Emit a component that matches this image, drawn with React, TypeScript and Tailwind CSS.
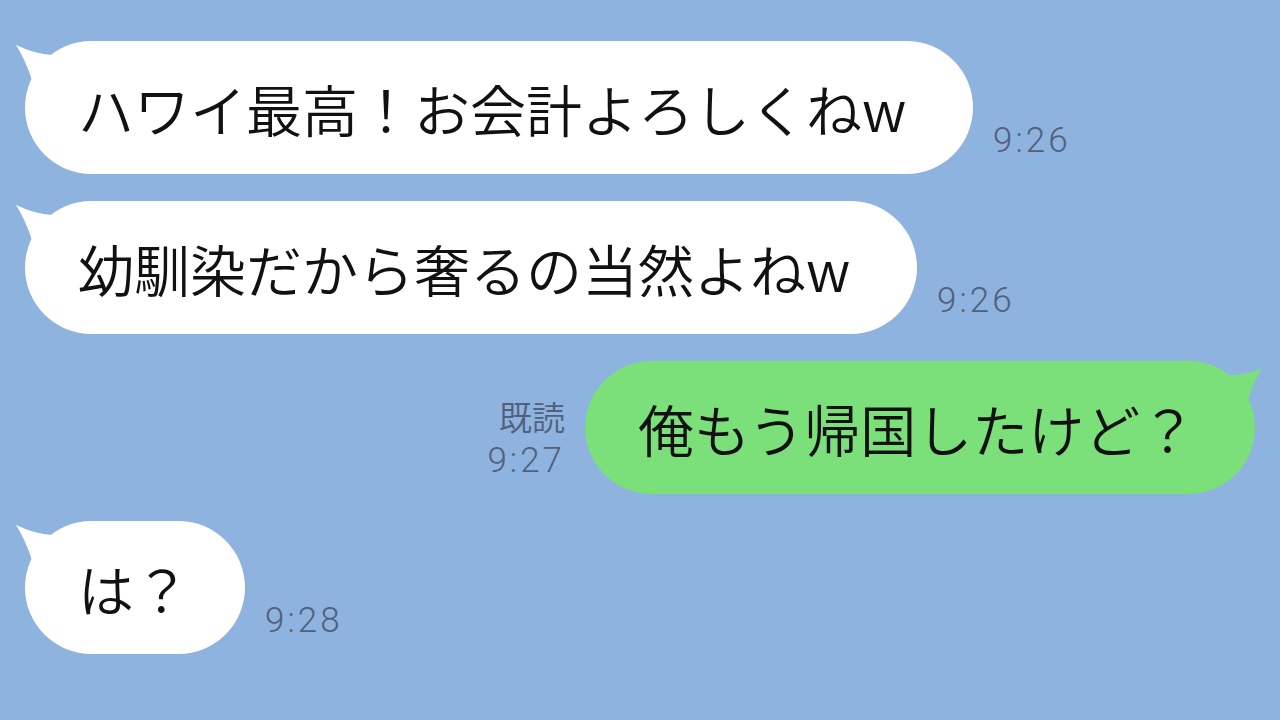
import React from "react";

const JP = { fontFamily: '"Noto Sans CJK JP", "Noto Sans", sans-serif' };
const TIME = { fontFamily: 'Roboto, "Noto Sans CJK JP", sans-serif' };

function LeftTail({ color }: { color: string }) {
  return (
    <svg
      className="absolute left-[-12px] top-0"
      width="50"
      height="50"
      viewBox="-12 0 50 50"
    >
      <path d="M -9 4 Q 10 13 27 14 L 32 32 L 7 39 Q 0 18 -9 4 Z" fill={color} />
    </svg>
  );
}

function RightTail({ color }: { color: string }) {
  return (
    <svg
      className="absolute right-[-12px] top-0"
      width="50"
      height="50"
      viewBox="-12 0 50 50"
      style={{ transform: "scaleX(-1)" }}
    >
      <path d="M -7 7 Q 10 15 27 14 L 32 32 L 7 39 Q 1 20 -7 7 Z" fill={color} />
    </svg>
  );
}

function Bubble({
  text,
  width,
  side,
}: {
  text: string;
  width: string;
  side: "left" | "right";
}) {
  const isLeft = side === "left";
  return (
    <div
      className={`relative h-[133px] ${width} shrink-0 rounded-full flex items-center pl-[53px] ${
        isLeft ? "bg-white" : "bg-[#7bdf7a]"
      }`}
    >
      {isLeft ? <LeftTail color="#ffffff" /> : <RightTail color="#7bdf7a" />}
      <span
        className="relative text-[56px] font-[350] leading-none whitespace-nowrap text-[#111111]"
        style={JP}
      >
        {text}
      </span>
    </div>
  );
}

function Time({ t }: { t: string }) {
  return (
    <div
      className="ml-[20px] mb-[16px] text-[35px] font-light leading-none tracking-[3px] text-[#52607a]"
      style={TIME}
    >
      {t}
    </div>
  );
}

export default function App() {
  return (
    <div className="w-[1280px] h-[720px] overflow-hidden bg-[#8eb3df] flex flex-col gap-[27px] pt-[41px]">
      <div className="flex items-end pl-[25px]">
        <Bubble text="ハワイ最高！お会計よろしくねw" width="w-[948px]" side="left" />
        <Time t="9:26" />
      </div>
      <div className="flex items-end pl-[25px]">
        <Bubble text="幼馴染だから奢るの当然よねw" width="w-[892px]" side="left" />
        <Time t="9:26" />
      </div>
      <div className="flex items-end justify-end pr-[25px]">
        <div className="mr-[20px] mb-[16px] flex flex-col items-end text-[#52607a]">
          <div className="text-[33px] font-[350] leading-none mb-[10px]" style={JP}>
            既読
          </div>
          <div className="text-[35px] font-light leading-none tracking-[3px]" style={TIME}>
            9:27
          </div>
        </div>
        <Bubble text="俺もう帰国したけど？" width="w-[670px]" side="right" />
      </div>
      <div className="flex items-end pl-[25px]">
        <Bubble text="は？" width="w-[220px]" side="left" />
        <Time t="9:28" />
      </div>
    </div>
  );
}
